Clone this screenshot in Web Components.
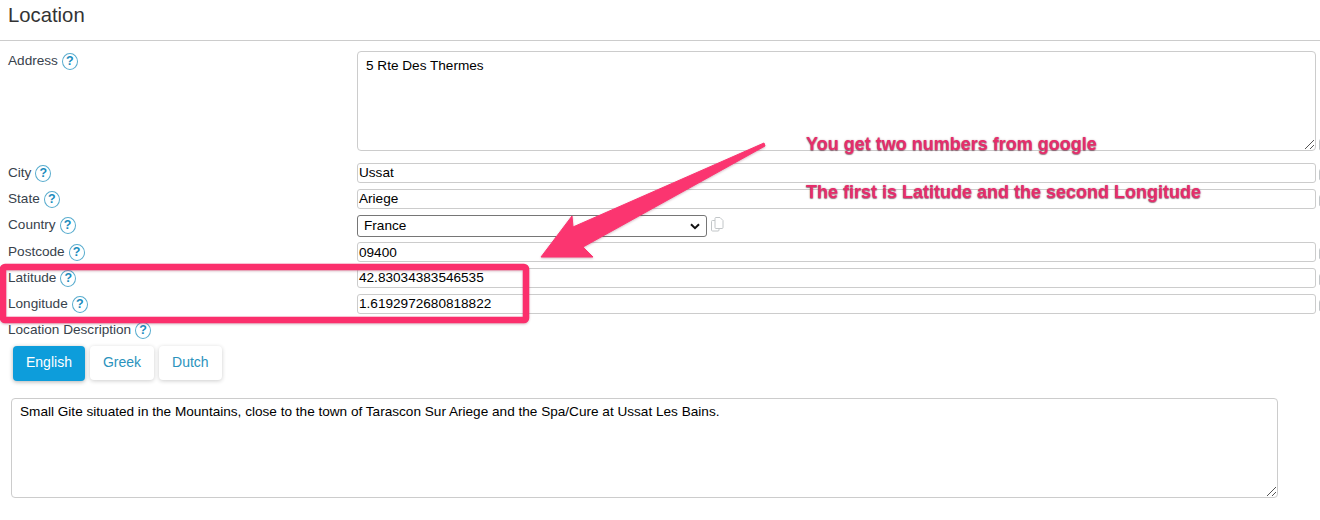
<!DOCTYPE html>
<html lang="en">
<head>
<meta charset="utf-8">
<title>Location</title>
<style>
   html, body { margin: 0; height: 520px; overflow: hidden; background: #fff; }
   body { font-family: "Liberation Sans", Arial, sans-serif; color: #333; position: relative; }
</style>
</head>
<body>
<script>
// @ts-check

const COPY_ICON = `
   <svg width="13" height="15" viewBox="0 0 13 15" fill="none" stroke="#c2c6c8" stroke-width="1">
      <path d="M4 3.5h-2.500a1 1 0 0 0-1 1v8.500a1 1 0 0 0 1 1h5.500a1 1 0 0 0 1-1v-1.500"/>
      <path d="M5 .5h4l3 3v7a1 1 0 0 1-1 1h-6a1 1 0 0 1-1-1v-9a1 1 0 0 1 1-1z" fill="#fff"/>
   </svg>`;

function define(name, html) {
   customElements.define(name, class extends HTMLElement {
      constructor() {
         super();
         this.attachShadow({ mode: "open" }).innerHTML = html;
      }
   });
}

define("loc-header", `
   <style>
      :host { display: block; height: 40px; border-bottom: 1px solid #ccc; padding-left: 8px; }
      h2 { margin: 0; padding-top: 3px; font: 400 20.300px/24px "Liberation Sans", Arial, sans-serif; color: #333; }
   </style>
   <h2><slot></slot></h2>
`);

define("loc-help", `
   <style>
      :host { display: inline-flex; align-items: center; justify-content: center; box-sizing: border-box; width: 16px; height: 17px; border: 1.3px solid #58acce; border-radius: 50%; color: #1b8bbd; font: 700 12.500px/1 "Liberation Sans", Arial, sans-serif; }
   </style>?
`);

class LocRow extends HTMLElement {
   static get observedAttributes() { return ["label"]; }
   constructor() {
      super();
      this.attachShadow({ mode: "open" }).innerHTML = `
         <style>
            :host { display: grid; grid-template-columns: 357px 959px 4px; align-items: start; }
            .label { padding-left: 8px; display: flex; align-items: center; gap: 4px; font-size: 13.6px; line-height: 18px; color: #38424c; margin-top: 1px; }
            .side { overflow: hidden; width: 4px; padding-top: var(--side-top, 3px); }
            .side svg { margin-left: 3px; display: block; }
            :host([noside]) .side { display: none; }
         </style>
         <div class="label"><span id="t"></span><loc-help></loc-help></div>
         <div><slot></slot></div>
         <div class="side">${COPY_ICON}</div>`;
   }
   attributeChangedCallback(_n, _o, val) {
      this.shadowRoot.getElementById("t").textContent = val;
   }
}
customElements.define("loc-row", LocRow);

define("loc-input", `
   <style>
      :host { display: block; box-sizing: border-box; height: 20px; padding: var(--input-top, 0) 1px 0; border: 1px solid #ccc; border-radius: 3px; background: #fff; color: #000; font-size: 13.6px; line-height: 18px; white-space: nowrap; overflow: hidden; }
   </style>
   <slot></slot>
`);

define("loc-area", `
   <style>
      :host { display: block; position: relative; box-sizing: border-box; height: 100px; padding: var(--pad, 6px 8px); border: 1px solid #ccc; border-radius: 4px; background: #fff; color: #000; font-size: 13.6px; line-height: 16px; }
      svg { position: absolute; right: 0; bottom: 0; }
   </style>
   <slot></slot>
   <svg width="11" height="11" viewBox="0 0 11 11" stroke="#555" stroke-width="1"><path d="M1 10 10 1M6 10l4-4"/></svg>
`);

define("loc-select", `
   <style>
      :host { display: flex; align-items: flex-start; gap: 4px; }
      .box { box-sizing: border-box; width: 350px; height: 22px; border: 1px solid #767676; border-radius: 3px; padding: 0 6px 2px; display: flex; align-items: center; justify-content: space-between; color: #000; font-size: 13.6px; background: #fff; }
      .box svg { margin-top: 2px; }
      .icon { display: block; height: 15px; margin-top: 2px; }
      .icon svg { display: block; }
   </style>
   <div class="box"><span><slot></slot></span>
      <svg width="10" height="7" viewBox="0 0 10 7" fill="none" stroke="#111" stroke-width="2"><path d="M1 1.200 5 5.200 9 1.200"/></svg>
   </div>
   <div class="icon">${COPY_ICON}</div>
`);

define("loc-tabs", `
   <style>
      :host { display: flex; gap: 5px; align-items: flex-start; }
   </style>
   <slot></slot>
`);

define("loc-tab", `
   <style>
      :host { display: block; box-sizing: border-box; height: 34px; padding: 0 13px; border-radius: 4px; background: #fff; color: #2b93bd; font-size: 14px; line-height: 32px; box-shadow: 0 1px 4px rgba(0,0,0,.2); }
      :host([active]) { height: 35px; background: #0d9ddb; color: #fff; box-shadow: 0 1px 4px rgba(0,0,0,.3); }
   </style>
   <slot></slot>
`);

define("loc-note", `
   <style>
      :host { position: absolute; left: 806px; font: 700 18px/20px "Liberation Sans", Arial, sans-serif; color: #e62d6b; white-space: nowrap; text-shadow: 0 1px 1px rgba(90,20,45,.55), 0 0 2px rgba(90,20,45,.3); }
   </style>
   <slot></slot>
`);

define("loc-markup", `
   <style>
      :host { position: absolute; left: 0; top: 0; width: 1320px; height: 520px; pointer-events: none; }
      svg { display: block; filter: drop-shadow(0 1px 1px rgba(120,30,60,.3)); }
   </style>
   <svg width="1320" height="520" viewBox="0 0 1320 520">
      <rect x="3" y="267" width="523" height="53" rx="2" fill="none" stroke="#fb2f6c" stroke-width="6.500"/>
      <path d="M764 143 765 146 583 247 593 257 541 257 572 216 573 227Z" fill="#fb3570" stroke="#fb3570" stroke-width="1" stroke-linejoin="round"/>
   </svg>
`);

define("loc-page", `
   <style>
      :host { display: block; }
      .main { display: flex; flex-direction: column; }
      .address { margin-top: 10px; --side-top: 85px; }
      .city { margin-top: 12px; }
      .state, .country, .latitude, .longitude { margin-top: 6px; }
      .postcode { margin-top: 5px; --input-top: 1px; }
      .desc { margin-top: 6px; height: 18px; }
      loc-tabs { margin: 8px 0 0 13px; }
      .text { margin: 17px 0 0 11px; width: 1267px; --pad: 5px 8px; }
   </style>
   <div class="main">
      <loc-header>Location</loc-header>
      <loc-row class="address" label="Address"><loc-area>5 Rte Des Thermes</loc-area></loc-row>
      <loc-row class="city" label="City"><loc-input>Ussat</loc-input></loc-row>
      <loc-row class="state" label="State"><loc-input>Ariege</loc-input></loc-row>
      <loc-row class="country" label="Country" noside><loc-select>France</loc-select></loc-row>
      <loc-row class="postcode" label="Postcode"><loc-input>09400</loc-input></loc-row>
      <loc-row class="latitude" label="Latitude"><loc-input>42.83034383546535</loc-input></loc-row>
      <loc-row class="longitude" label="Longitude"><loc-input>1.6192972680818822</loc-input></loc-row>
      <loc-row class="desc" label="Location Description" noside></loc-row>
      <loc-tabs>
         <loc-tab active>English</loc-tab>
         <loc-tab>Greek</loc-tab>
         <loc-tab>Dutch</loc-tab>
      </loc-tabs>
      <loc-area class="text">Small Gite situated in the Mountains, close to the town of Tarascon Sur Ariege and the Spa/Cure at Ussat Les Bains.</loc-area>
   </div>
`);

customElements.define("loc-root", class extends HTMLElement {
   constructor() {
      super();
      this.attachShadow({ mode: "open" }).innerHTML = `
         <style>:host { display: block; position: relative; width: 1320px; height: 520px; overflow: hidden; }</style>
         <loc-page></loc-page>
         <loc-markup></loc-markup>
         <loc-note style="top:134px">You get two numbers from google</loc-note>
         <loc-note style="top:182px">The first is Latitude and the second Longitude</loc-note>`;
   }
});

document.body.appendChild(document.createElement("loc-root"));
</script>
</body>
</html>
